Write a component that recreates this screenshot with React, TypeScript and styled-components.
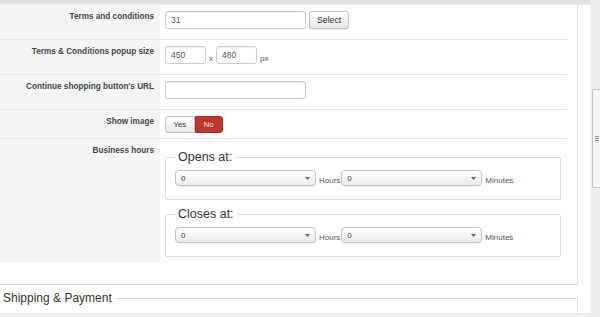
import React from 'react'
import styled, { createGlobalStyle } from 'styled-components'

const GlobalStyle = createGlobalStyle`
  html, body {
    margin: 0;
    padding: 0;
    background: #fff;
  }
  body {
    font-family: "Liberation Sans", Arial, sans-serif;
    width: 600px;
    height: 317px;
    overflow: hidden;
  }
`

const Page = styled.div`
  display: flex;
  width: 600px;
  height: 317px;
`
const Main = styled.div`
  display: flex;
  flex-direction: column;
  width: 590px;
  height: 317px;
  overflow: hidden;
`
const TopBand = styled.div`
  height: 4px;
  flex: none;
  background: #e3e3e3;
  border-bottom: 1px solid #efefef;
`
const Panel = styled.div`
  flex: none;
  margin-right: 12px;
  padding: 0 10px 22px 0;
  border-right: 1px solid #dddddd;
  border-bottom: 1px solid #dddddd;
`
const Row = styled.div<{ $last?: boolean }>`
  display: grid;
  grid-template-columns: 160px 1fr;
  border-bottom: ${({ $last }) => ($last ? 'none' : '1px solid #e6e6e6')};
`
const Label = styled.div`
  background: #f4f4f4;
  text-align: right;
  padding: 7px 6px 0 0;
  font-size: 8.2px;
  line-height: 10px;
  font-weight: bold;
  color: #474747;
`
const Cell = styled.div<{ $bottom?: number }>`
  display: flex;
  align-items: flex-end;
  padding: 6px 6px ${({ $bottom = 10 }) => $bottom}px 5px;
`
const Column = styled.div`
  display: flex;
  flex-direction: column;
  flex: 1;
`
const Input = styled.div<{ $width: number }>`
  box-sizing: border-box;
  width: ${({ $width }) => $width}px;
  height: 18px;
  padding: 0 5px;
  border: 1px solid #cccccc;
  border-radius: 3px;
  box-shadow: inset 0 1px 1px rgba(0, 0, 0, 0.075);
  font-size: 8.5px;
  line-height: 16px;
  color: #555;
`
const Button = styled.div`
  box-sizing: border-box;
  height: 18px;
  margin-left: 3px;
  padding: 0 7px;
  border: 1px solid #c3c3c3;
  border-radius: 3px;
  background: linear-gradient(#ffffff, #e6e6e6);
  box-shadow: 0 1px 1px rgba(0, 0, 0, 0.08);
  font-size: 8.7px;
  line-height: 16px;
  color: #333;
`
const Unit = styled.span<{ $left?: number; $right?: number }>`
  margin: 0 ${({ $right = 0 }) => $right}px 1px ${({ $left = 3 }) => $left}px;
  font-size: 8px;
  line-height: 9px;
  color: #555;
`
const Toggle = styled.div`
  display: flex;
`
const ToggleOption = styled.div<{ $active?: boolean }>`
  box-sizing: border-box;
  height: 17px;
  padding: 0 ${({ $active }) => ($active ? 8 : 7.5)}px;
  font-size: 7.8px;
  line-height: 15px;
  border: 1px solid ${({ $active }) => ($active ? '#a52f28' : '#c3c3c3')};
  background: ${({ $active }) => ($active ? '#bd362f' : 'linear-gradient(#ffffff, #e8e8e8)')};
  color: ${({ $active }) => ($active ? '#fbe3e1' : '#333')};
  border-radius: ${({ $active }) => ($active ? '0 3px 3px 0' : '3px 0 0 3px')};
`
const Group = styled.fieldset<{ $top: number }>`
  margin: ${({ $top }) => $top}px 0 0;
  padding: 6px 9px 13px;
  min-width: 0;
  border: 1px solid #dddddd;
  border-radius: 2px;
`
const GroupTitle = styled.legend`
  padding: 0 3px;
  font-size: 12.5px;
  line-height: 14px;
  color: #333;
`
const TimeRow = styled.div`
  display: flex;
  align-items: flex-end;
`
const SelectBox = styled.div`
  box-sizing: border-box;
  display: flex;
  align-items: center;
  justify-content: space-between;
  width: 141px;
  height: 16px;
  padding: 0 5px 0 5px;
  border: 1px solid #c4c4c4;
  border-radius: 4px;
  background: linear-gradient(#ffffff, #ebebeb);
  box-shadow: 0 1px 1px rgba(0, 0, 0, 0.06);
  font-size: 8px;
  color: #444;
`
const Section = styled.fieldset`
  flex: none;
  margin: 6px 12px 0 0;
  padding: 8px 0 0;
  min-width: 0;
  border: none;
  border-top: 1px solid #dddddd;
  border-right: 1px solid #dddddd;
`
const SectionTitle = styled.legend`
  padding: 0 3px;
  font-size: 12px;
  line-height: 14px;
  color: #333;
`
const BottomBand = styled.div`
  flex: 1;
  background: #efefef;
  border-top: 1px solid #e4e4e4;
`
const Scrollbar = styled.div`
  width: 10px;
  height: 317px;
  background: #ededed;
`
const Thumb = styled.div`
  display: flex;
  align-items: center;
  justify-content: center;
  box-sizing: border-box;
  margin: 89px 0 0 2px;
  height: 99px;
  background: #f5f5f5;
  border: 1px solid #c6c6c6;
  border-right: none;
  border-radius: 2px 0 0 2px;
`

const Arrow = () => (
  <svg width="5" height="3" viewBox="0 0 5 3">
    <path d="M0 0h5L2.5 3z" fill="#666" />
  </svg>
)

const Grip = () => (
  <svg width="4" height="6" viewBox="0 0 4 6">
    <path d="M0 0.5h4M0 2.5h4M0 4.5h4" stroke="#9a9a9a" strokeWidth="1" />
  </svg>
)

type TimeProps = { title: string; top: number }

const TimeGroup = ({ title, top }: TimeProps): React.ReactElement => (
  <Group $top={top}>
    <GroupTitle>{title}</GroupTitle>
    <TimeRow>
      <SelectBox>
        0
        <Arrow />
      </SelectBox>
      <Unit $right={1}>Hours</Unit>
      <SelectBox>
        0
        <Arrow />
      </SelectBox>
      <Unit>Minutes</Unit>
    </TimeRow>
  </Group>
)

const App = (): React.ReactElement => (
  <>
    <GlobalStyle />
    <Page>
      <Main>
        <TopBand />
        <Panel>
          <Row>
            <Label>Terms and conditions</Label>
            <Cell>
              <Input $width={141}>31</Input>
              <Button>Select</Button>
            </Cell>
          </Row>
          <Row>
            <Label>Terms &amp; Conditions popup size</Label>
            <Cell>
              <Input $width={41}>450</Input>
              <Unit $right={3}>x</Unit>
              <Input $width={41}>480</Input>
              <Unit>px</Unit>
            </Cell>
          </Row>
          <Row>
            <Label>Continue shopping button's URL</Label>
            <Cell>
              <Input $width={141} />
            </Cell>
          </Row>
          <Row>
            <Label>Show image</Label>
            <Cell $bottom={5}>
              <Toggle>
                <ToggleOption>Yes</ToggleOption>
                <ToggleOption $active>No</ToggleOption>
              </Toggle>
            </Cell>
          </Row>
          <Row $last>
            <Label>Business hours</Label>
            <Cell $bottom={5}>
              <Column>
                <TimeGroup title="Opens at:" top={5} />
                <TimeGroup title="Closes at:" top={7} />
              </Column>
            </Cell>
          </Row>
        </Panel>
        <Section>
          <SectionTitle>Shipping &amp; Payment</SectionTitle>
        </Section>
        <BottomBand />
      </Main>
      <Scrollbar>
        <Thumb>
          <Grip />
        </Thumb>
      </Scrollbar>
    </Page>
  </>
)

export default App
